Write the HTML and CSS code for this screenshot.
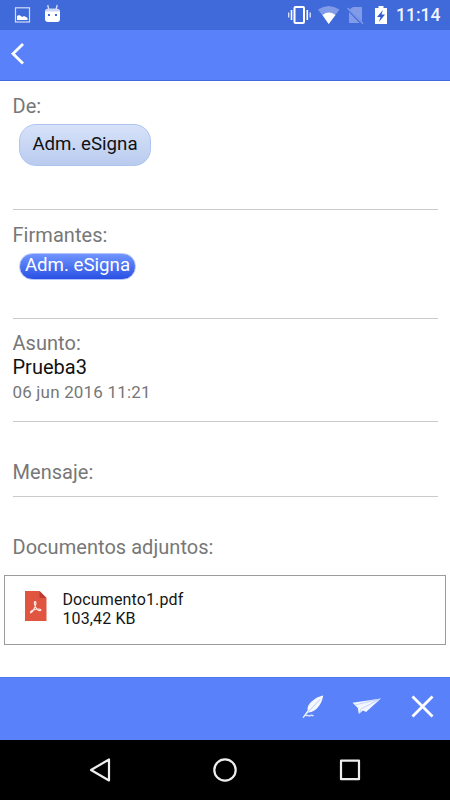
FILE: index.html
```html
<!DOCTYPE html>
<html lang="es">
<head>
<meta charset="utf-8">
<title>eSigna</title>
<link rel="stylesheet" href="styles.css">
</head>
<body>
<div class="screen">
  <div class="status">
    <svg class="status-left" width="64" height="30" viewBox="0 0 64 30">
      <rect x="15.5" y="7.8" width="14" height="14.2" fill="none" stroke="#d3dcf8" stroke-width="1.2"/>
      <path d="M17 20v-4l2-1 2 1 1 1 2-1 2 1 1.500 1v2z" fill="#fff"/>
      <path d="M45 10.500h15v8.500q0 3-3 3h-9q-3 0-3-3z" fill="#fff"/>
      <path d="M45 11.500q0-3 4-3h7q4 0 4 3z" fill="#cbd6f7"/>
      <path d="M47.700 5l1 4M57.200 5l-1 4" stroke="#d8e0fa" stroke-width="1.300"/>
      <path d="M48 14h2v2h-2zM55 14h2v2h-2z" fill="#4069da"/>
    </svg>
    <svg class="status-right" width="110" height="30" viewBox="0 0 110 30">
      <rect x="14.500" y="7" width="9.500" height="16" rx="1" fill="none" stroke="#fff" stroke-width="2"/>
      <path d="M11.500 10v10M27.300 10v10" stroke="#fff" stroke-width="1.600"/>
      <path d="M8.700 12.500v5M30.200 12.500v5" stroke="#dfe6fb" stroke-width="1.300"/>
      <path d="M38 9.500Q48.500 2.500 59.500 9.500L48.700 24z" fill="#819be8"/>
      <path d="M42.500 15Q48.700 10.200 55.500 15L48.700 24z" fill="#fff"/>
      <path d="M73 7h9v14.500L69.500 9.500zM69 12L79.500 23H69z" fill="#819be8"/>
      <path d="M67.500 8L83 23.800" stroke="#819be8" stroke-width="1.400"/>
      <path d="M95 8h3.500V6h5v2h3.500v16H95z" fill="#fff"/>
      <path d="M103 10l-6 7h3.500l-1.500 5 6-7.500h-3.500z" fill="#315bd0"/>
    </svg>
    <span class="clock">11:14</span>
  </div>
  <header class="topbar">
    <svg width="40" height="50" viewBox="0 0 40 50"><path d="M23 14L13 23.700l10 9.800" fill="none" stroke="#fff" stroke-width="2.800"/></svg>
  </header>
  <main class="content">
    <section class="field from">
      <div class="label">De:</div>
      <span class="chip sender">Adm. eSigna</span>
    </section>
    <section class="field signers">
      <div class="label">Firmantes:</div>
      <span class="chip signer">Adm. eSigna</span>
    </section>
    <section class="field subject">
      <div class="label">Asunto:</div>
      <div class="title">Prueba3</div>
      <div class="date">06 jun 2016 11:21</div>
    </section>
    <section class="field message">
      <div class="label">Mensaje:</div>
    </section>
    <div class="label docs">Documentos adjuntos:</div>
    <div class="card">
      <svg width="22" height="30" viewBox="0 0 22 30">
        <path d="M0 0h14.500L21.500 7v23H0z" fill="#df5540"/>
        <path d="M14.500 0L21.500 7h-7z" fill="#bd3b30"/>
        <path d="M10 10.500c2.200 0 0 6-1.500 8.500-1.200 2.200-3.500 3.800-3 2 .5-1.500 5-3 8-3 2.500 0 3.200 1.700 1.300 1.700-2.500 0-5-4.200-5.300-6.700-.2-1.500 0-2.500.5-2.500z" fill="none" stroke="#ffe9e5" stroke-width="1.200"/>
      </svg>
      <div class="file">
        <div>Documento1.pdf</div>
        <div>103,42 KB</div>
      </div>
    </div>
  </main>
  <footer class="actions">
    <svg width="160" height="62" viewBox="0 0 160 62">
      <path d="M33.300 17.500c-7 1-17 8.500-15.500 14.500l-5.300 7.500 1 .5 4.500-5.500c7 0 13.500-7 15.300-17z" fill="#f5f8ff"/>
      <path d="M30 21.500L18 34" stroke="#a9bffd" stroke-width=".8"/>
      <path d="M15.500 38c2-2 3 .8 4.500-.3s2-.8 3.500.2" fill="none" stroke="#dce5ff" stroke-width="1.500"/>
      <path d="M62.500 24.700L91 20.500 76 34l-3-1.500-4.200 3.500-1-6z" fill="#f2f6ff"/>
      <path d="M65 27l25-6-19 10-1.200 4" fill="none" stroke="#b1c5ff" stroke-width=".7"/>
      <path d="M122.500 18.500l20 20M142.500 18.500l-20 20" stroke="#fff" stroke-width="2.800"/>
    </svg>
  </footer>
  <nav class="navbar">
    <svg width="450" height="60" viewBox="0 0 450 60" fill="none" stroke="#eee" stroke-width="2.200" stroke-linejoin="round">
      <path d="M109 19.500v21L91 30z"/>
      <circle cx="225" cy="30" r="10.700"/>
      <rect x="341" y="20.700" width="18" height="18.500"/>
    </svg>
  </nav>
</div>
</body>
</html>
```
FILE: styles.css
```css
* { box-sizing: border-box; }
body { margin: 0; font-family: Roboto, sans-serif; background: #fff; }
svg { display: block; }
.screen { width: 450px; height: 800px; display: flex; flex-direction: column; overflow: hidden; }
.status { height: 30px; background: #4069da; display: flex; flex: none; }
.status-right { margin-left: 216px; }
.clock { margin-left: 6px; line-height: 31px; font-size: 17.500px; font-weight: 500; color: #f0f4ff; white-space: nowrap; }
.topbar { height: 51px; flex: none; background: #5982fa; border-bottom: 1px solid #426bdd; }
.content { flex: 1; min-height: 0; }
.field { margin: 0 12.500px; border-bottom: 1px solid #cacaca; }
.label { font-size: 20px; line-height: 24px; color: #777; letter-spacing: .04px; }
.from { height: 129px; padding-top: 13px; }
.signers { height: 109px; padding-top: 13px; }
.subject { height: 103px; padding-top: 12px; }
.message { height: 75px; padding-top: 38px; }
.chip { display: block; width: max-content; margin-left: 6.500px; font-size: 18.700px; }
.sender { width: 132px; height: 42px; margin-top: 6px; line-height: 38px; text-align: center; border: 1px solid #adc4f1; border-radius: 17px; background: linear-gradient(#d7e2f8, #b9cbef); color: #111; }
.signer { width: 117px; height: 27px; margin-top: 6px; line-height: 23px; text-align: center; border: 1px solid #b5c6fa; border-radius: 14px; background: linear-gradient(#7095ff, #2950e3); color: #fff; }
.title { font-size: 20px; line-height: 24px; color: #111; }
.date { font-size: 17px; line-height: 27px; letter-spacing: .18px; color: #777; }
.docs { margin: 38px 12.500px 0; }
.card { margin: 16px 4px 0; height: 70px; border: 1px solid #999da0; display: flex; padding: 15px 0 0 20px; }
.file { margin: -1px 0 0 15.500px; font-size: 16px; line-height: 19px; letter-spacing: .12px; color: #151515; }
.actions { height: 63px; flex: none; background: #5982fa; border-top: 1px solid #4f79ee; display: flex; justify-content: flex-end; }
.navbar { height: 60px; flex: none; background: #000; }
```
